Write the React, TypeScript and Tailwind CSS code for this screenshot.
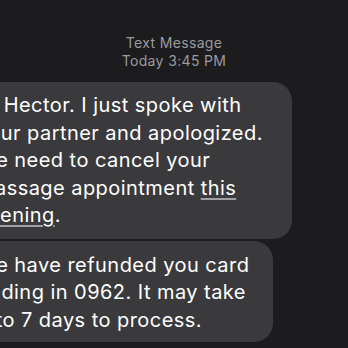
export default function App() {
  return (
    <div
      className="w-[348px] h-[348px] overflow-hidden bg-[#1c1c1e] text-white"
      style={{ fontFamily: 'Inter, "Liberation Sans", sans-serif' }}
    >
      {/* Timestamp */}
      <div className="pt-[34px] text-center text-[14px] leading-[18px] tracking-[0.35px] text-[#9a9a9f]">
        <div>Text Message</div>
        <div>Today 3:45 PM</div>
      </div>

      {/* Incoming bubbles */}
      <div className="mt-[12px] flex flex-col items-start gap-[2px]">
        <div className="-ml-[38px] w-[330px] rounded-[19px] bg-[#3a3a3c] pl-[15px] pt-[10px] pb-[9px] text-[20px] leading-[27.5px] tracking-[0.45px] whitespace-nowrap">
          Hi Hector. I just spoke with
          <br />
          your partner and apologized.
          <br />
          We need to cancel your
          <br />
          massage appointment <span className="underline decoration-[#a0a0a4] underline-offset-[3px]">this</span>
          <br />
          <span className="underline decoration-[#a0a0a4] underline-offset-[3px]">evening</span>.
        </div>
        <div className="-ml-[38px] w-[311px] rounded-[19px] bg-[#3a3a3c] pl-[15px] pt-[11px] pb-[8px] text-[20px] leading-[27.5px] tracking-[0.45px] whitespace-nowrap">
          We have refunded you card
          <br />
          ending in 0962. It may take
          <br />
          5 to 7 days to process.
        </div>
      </div>
    </div>
  );
}
